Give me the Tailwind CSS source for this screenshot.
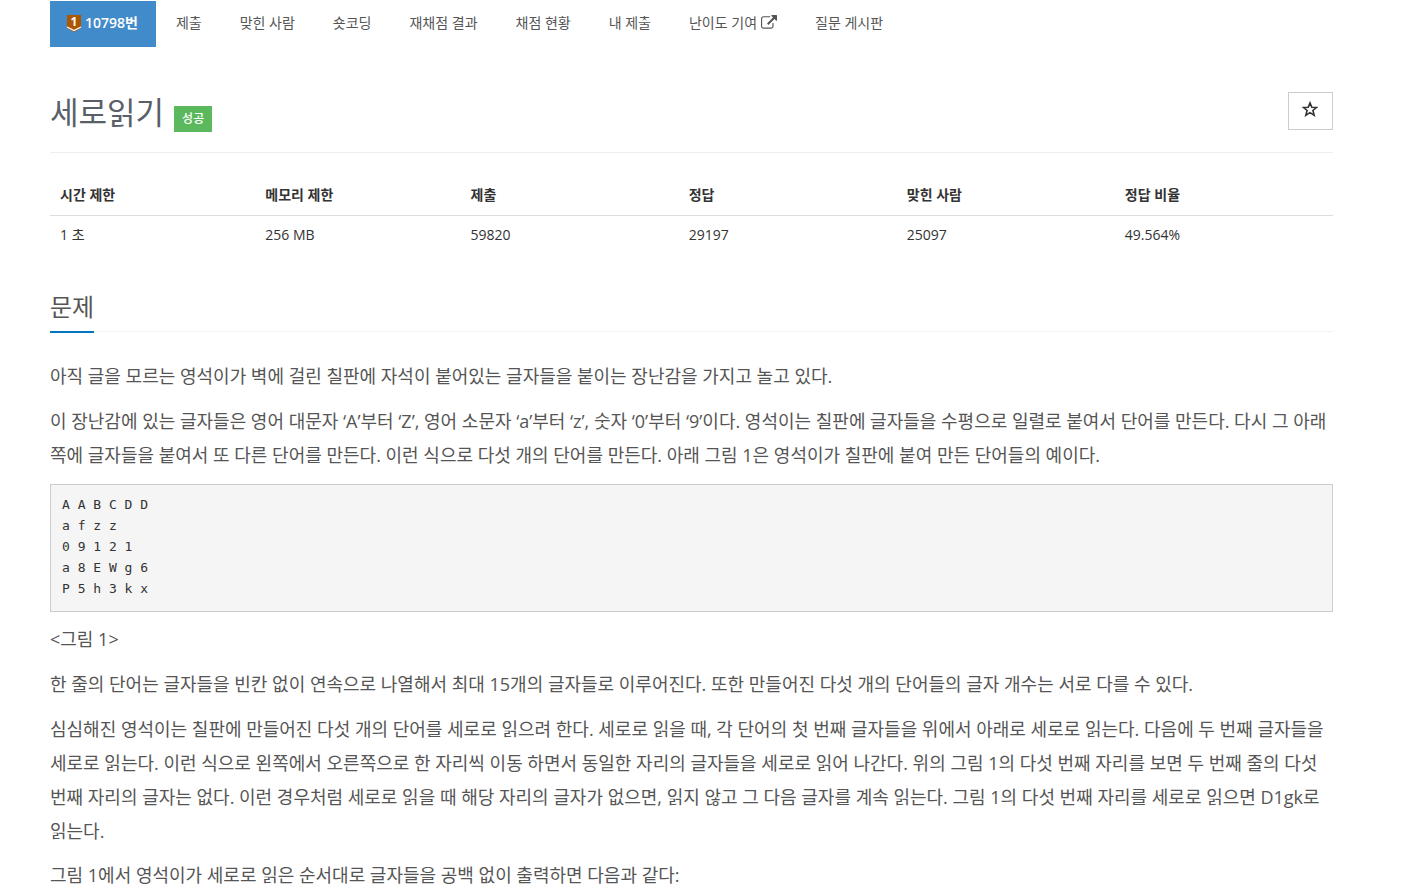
<!DOCTYPE html>
<html lang="ko">
<head>
  <meta charset="UTF-8" />
  <meta name="viewport" content="width=device-width, initial-scale=1.0" />
  <title>10798번: 세로읽기</title>
  <script src="https://cdn.jsdelivr.net/npm/@tailwindcss/browser@4"></script>
</head>
<body class="bg-white text-[#555] font-['Open_Sans','Noto_Sans_CJK_KR',sans-serif]">
  <div class="pl-[50px] pr-[85px]">
    <!-- Problem menu -->
    <nav class="flex gap-[2px] pt-px text-sm leading-[22px]">
      <a href="#" class="flex items-center gap-[3px] bg-[#428bca] text-white font-semibold pl-4 pr-[18px] pt-[11px] pb-[13px]">
        <svg class="w-4 h-5" viewBox="0 0 16 20" aria-hidden="true">
          <path d="M1 2h14v13l-7 4-7-4z" fill="#ad5600" />
          <path d="M1 14l7 3.500 7-3.500" fill="none" stroke="#fff" stroke-width="1.300" />
          <text x="8" y="12.500" text-anchor="middle" font-size="12" font-weight="700" fill="#fff">1</text>
        </svg>
        <span>10798번</span>
      </a>
      <a href="#" class="px-[18px] pt-[11px] pb-[13px]">제출</a>
      <a href="#" class="px-[18px] pt-[11px] pb-[13px]">맞힌 사람</a>
      <a href="#" class="px-[18px] pt-[11px] pb-[13px]">숏코딩</a>
      <a href="#" class="px-[18px] pt-[11px] pb-[13px]">재채점 결과</a>
      <a href="#" class="px-[18px] pt-[11px] pb-[13px]">채점 현황</a>
      <a href="#" class="px-[18px] pt-[11px] pb-[13px]">내 제출</a>
      <a href="#" class="flex items-center gap-1 px-[18px] pt-[11px] pb-[13px]">
        <span>난이도 기여</span>
        <svg class="w-4 h-4" viewBox="0 0 1792 1792" fill="currentColor" aria-hidden="true">
          <path d="M1408 928v320q0 119-84.500 203.500t-203.500 84.500h-832q-119 0-203.500-84.500t-84.500-203.500v-832q0-119 84.500-203.500t203.500-84.500h704q14 0 23 9t9 23v64q0 14-9 23t-23 9h-704q-66 0-113 47t-47 113v832q0 66 47 113t113 47h832q66 0 113-47t47-113v-320q0-14 9-23t23-9h64q14 0 23 9t9 23zm384-864v512q0 26-19 45t-45 19-45-19l-176-176-652 652q-10 10-23 10t-23-10l-114-114q-10-10-10-23t10-23l652-652-176-176q-19-19-19-45t19-45 45-19h512q26 0 45 19t19 45z" />
        </svg>
      </a>
      <a href="#" class="px-[18px] pt-[11px] pb-[13px]">질문 게시판</a>
    </nav>

    <!-- Title -->
    <header class="flex items-start justify-between mt-[45px] pb-5 border-b border-[#eee]">
      <div class="flex items-end gap-[10px]">
        <h1 class="text-[31px] leading-10 text-[#585f69]">세로읽기</h1>
        <span class="bg-[#5cb85c] text-white text-xs font-medium leading-[18px] px-2 py-1">성공</span>
      </div>
      <button type="button" aria-label="즐겨찾기" class="flex justify-center w-[45px] h-[38px] pt-2 pr-px border border-[#ccc] text-[#333]">
        <svg class="w-4 h-4" viewBox="1 1 16 16" fill="none" stroke="currentColor" stroke-width="1.600" aria-hidden="true">
          <path d="M9 2.900L10.800 7.200 15.400 7.500 11.900 10.500 13.200 15.300 9 12.600 4.800 15.300 6.100 10.500 2.600 7.500 7.200 7.200z" />
        </svg>
      </button>
    </header>

    <table class="w-full table-fixed mt-[22px] text-sm leading-[22px] text-[#333] text-left">
      <thead>
        <tr class="border-b border-[#ddd]">
          <th class="w-[16%] px-[10px] py-[9px] font-bold">시간 제한</th>
          <th class="w-[16%] px-[10px] py-[9px] font-bold">메모리 제한</th>
          <th class="w-[17%] px-[10px] py-[9px] font-bold">제출</th>
          <th class="w-[17%] px-[10px] py-[9px] font-bold">정답</th>
          <th class="w-[17%] px-[10px] py-[9px] font-bold">맞힌 사람</th>
          <th class="w-[17%] px-[10px] py-[9px] font-bold">정답 비율</th>
        </tr>
      </thead>
      <tbody>
        <tr>
          <td class="px-[10px] pt-2 pb-[10px]">1 초</td>
          <td class="px-[10px] pt-2 pb-[10px]">256 MB</td>
          <td class="px-[10px] pt-2 pb-[10px]">59820</td>
          <td class="px-[10px] pt-2 pb-[10px]">29197</td>
          <td class="px-[10px] pt-2 pb-[10px]">25097</td>
          <td class="px-[10px] pt-2 pb-[10px]">49.564%</td>
        </tr>
      </tbody>
    </table>

    <!-- Problem statement -->
    <section class="mt-[33px]">
      <div class="flex border-b border-dotted border-[#e4e9f0]">
        <h2 class="-mb-[2px] pb-[6px] border-b-2 border-[#0076c0] text-2xl leading-9">문제</h2>
      </div>
      <div class="mt-[27px] text-lg leading-[34px]">
        <p class="mb-[11px]">아직 글을 모르는 영석이가 벽에 걸린 칠판에 자석이 붙어있는 글자들을 붙이는 장난감을 가지고 놀고 있다.</p>
        <p class="mb-3">이 장난감에 있는 글자들은 영어 대문자 ‘A’부터 ‘Z’, 영어 소문자 ‘a’부터 ‘z’, 숫자 ‘0’부터 ‘9’이다. 영석이는 칠판에 글자들을 수평으로 일렬로 붙여서 단어를 만든다. 다시 그 아래쪽에 글자들을 붙여서 또 다른 단어를 만든다. 이런 식으로 다섯 개의 단어를 만든다. 아래 그림 1은 영석이가 칠판에 붙여 만든 단어들의 예이다.</p>
        <pre class="mb-[10px] px-[11px] pt-[9px] pb-3 bg-[#f5f5f5] border border-[#ccc] text-[#333] text-[13px] leading-[21px] font-['DejaVu_Sans_Mono',monospace]">A A B C D D
a f z z
0 9 1 2 1
a 8 E W g 6
P 5 h 3 k x</pre>
        <p class="mb-[11px]">&lt;그림 1&gt;</p>
        <p class="mb-[11px]">한 줄의 단어는 글자들을 빈칸 없이 연속으로 나열해서 최대 15개의 글자들로 이루어진다. 또한 만들어진 다섯 개의 단어들의 글자 개수는 서로 다를 수 있다.</p>
        <p class="mb-[10px]">심심해진 영석이는 칠판에 만들어진 다섯 개의 단어를 세로로 읽으려 한다. 세로로 읽을 때, 각 단어의 첫 번째 글자들을 위에서 아래로 세로로 읽는다. 다음에 두 번째 글자들을 세로로 읽는다. 이런 식으로 왼쪽에서 오른쪽으로 한 자리씩 이동 하면서 동일한 자리의 글자들을 세로로 읽어 나간다. 위의 그림 1의 다섯 번째 자리를 보면 두 번째 줄의 다섯 번째 자리의 글자는 없다. 이런 경우처럼 세로로 읽을 때 해당 자리의 글자가 없으면, 읽지 않고 그 다음 글자를 계속 읽는다. 그림 1의 다섯 번째 자리를 세로로 읽으면 D1gk로 읽는다.</p>
        <p>그림 1에서 영석이가 세로로 읽은 순서대로 글자들을 공백 없이 출력하면 다음과 같다:</p>
      </div>
    </section>
  </div>
</body>
</html>
